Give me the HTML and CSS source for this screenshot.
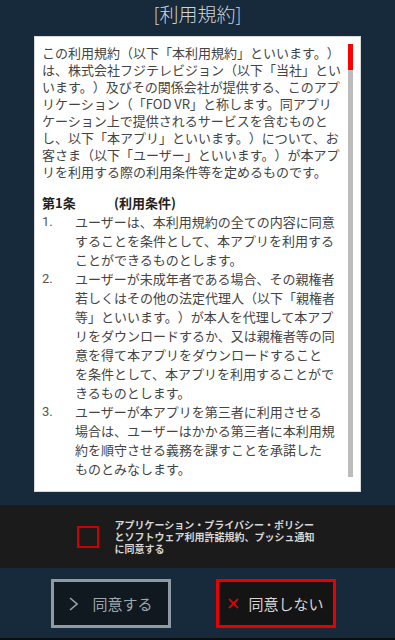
FILE: index.html
```html
<!DOCTYPE html>
<html lang="ja">
<head>
<meta charset="utf-8">
<title>利用規約</title>
<link rel="stylesheet" href="styles.css">
</head>
<body>
<div class="screen">
  <header class="title">[利用規約]</header>
  <section class="terms">
    <div class="terms-body">
      <p class="intro">この利用規約（以下「本利用規約」といいます。）は、株式会社フジテレビジョン（以下「当社」といいます。）及びその関係会社が提供する、このアプリケーション（「FOD VR」と称します。同アプリケーション上で提供されるサービスを含むものとし、以下「本アプリ」といいます。）について、お客さま（以下「ユーザー」といいます。）が本アプリを利用する際の利用条件等を定めるものです。</p>
      <h2 class="article"><span class="article-no">第1条</span>(利用条件)</h2>
      <ol class="clauses">
        <li class="clause"><span class="num">1.</span><span class="clause-text">ユーザーは、本利用規約の全ての内容に同意することを条件として、本アプリを利用することができるものとします。</span></li>
        <li class="clause"><span class="num">2.</span><span class="clause-text">ユーザーが未成年者である場合、その親権者若しくはその他の法定代理人（以下「親権者等」といいます。）が本人を代理して本アプリをダウンロードするか、又は親権者等の同意を得て本アプリをダウンロードすること<br>を条件として、本アプリを利用することができるものとします。</span></li>
        <li class="clause"><span class="num">3.</span><span class="clause-text">ユーザーが本アプリを第三者に利用させる<br>場合は、ユーザーはかかる第三者に本利用規約を順守させる義務を課すことを承諾した<br>ものとみなします。</span></li>
      </ol>
    </div>
    <div class="scrollbar"><div class="scrollbar-thumb"></div></div>
  </section>
  <section class="consent">
    <span class="checkbox"></span>
    <p class="consent-text">アプリケーション・プライバシー・ポリシーとソフトウェア利用許諾規約、プッシュ通知に同意する</p>
  </section>
  <nav class="actions">
    <button class="btn btn-agree" type="button">
      <svg class="icon-chevron" width="9" height="14" viewBox="0 0 9 14"><polyline points="1,1 8,7 1,13" fill="none" stroke="#9ea7ad" stroke-width="1.5"/></svg>
      <span>同意する</span>
    </button>
    <button class="btn btn-decline" type="button">
      <svg class="icon-x" width="11" height="11" viewBox="0 0 11 11"><path d="M1 1L10 10M10 1L1 10" stroke="#e00000" stroke-width="1.8" fill="none"/></svg>
      <span>同意しない</span>
    </button>
  </nav>
</div>
</body>
</html>
```

FILE: styles.css
```css
* { box-sizing: border-box; }

html, body {
  margin: 0;
  padding: 0;
}

body {
  background: #172a3b;
  font-family: "Noto Sans CJK JP", "Noto Sans", sans-serif;
}

.screen {
  width: 395px;
  height: 640px;
  display: flex;
  flex-direction: column;
  border-bottom: 2px solid #0b0f12;
}

.title {
  height: 36px;
  line-height: 28px;
  text-align: center;
  font-size: 19px;
  color: #cfd3d6;
  font-weight: 300;
}

.terms {
  margin: 0 34px;
  height: 456px;
  background: #fff;
  display: flex;
  padding: 7px 8px 14px 7px;
  border: 1px solid #d8d8d8;
}

.terms-body {
  width: 300px;
  flex: none;
  overflow: hidden;
  color: #444;
  font-size: 13px;
  text-spacing-trim: space-all;
}

.intro {
  margin: 0;
  line-height: 17px;
}

.article {
  margin: 13px 0 0;
  font-size: 13px;
  line-height: 19px;
  font-weight: 700;
  color: #222;
}

.article-no {
  display: inline-block;
  width: 72px;
}

.clauses {
  list-style: none;
  margin: 0;
  padding: 0;
}

.clause {
  display: grid;
  grid-template-columns: 33px 263px;
  line-height: 19px;
}

.num {
  color: #555;
  font-family: "Roboto", "Noto Sans", sans-serif;
}

.scrollbar {
  width: 5px;
  margin-left: 6px;
  background: #bcbcbc;
  flex: none;
}

.scrollbar-thumb {
  height: 26px;
  background: #ff0000;
}

.consent {
  margin-top: 13px;
  height: 63px;
  background: #1b1b1b;
  display: flex;
  align-items: center;
  justify-content: center;
  gap: 16px;
  padding-right: 3px;
}

.checkbox {
  width: 22px;
  height: 22px;
  border: 2px solid #d00000;
  flex: none;
}

.consent-text {
  width: 201px;
  margin: 0;
  font-size: 10px;
  line-height: 12px;
  font-weight: 700;
  color: #d6d6d6;
}

.actions {
  margin-top: 11px;
  display: flex;
  gap: 45px;
  padding-left: 51px;
}

.btn {
  width: 120px;
  height: 49px;
  border: 3px solid;
  display: flex;
  align-items: center;
  justify-content: center;
  font-family: "Noto Sans CJK JP", "Noto Sans", sans-serif;
  font-size: 15px;
  padding: 0;
}

.btn-agree {
  border-color: #8e9ba5;
  background: #101820;
  color: #9ea7ad;
  gap: 14px;
}

.btn-decline {
  border-color: #e80000;
  background: #141414;
  color: #d6d6d6;
  gap: 9px;
}
```
